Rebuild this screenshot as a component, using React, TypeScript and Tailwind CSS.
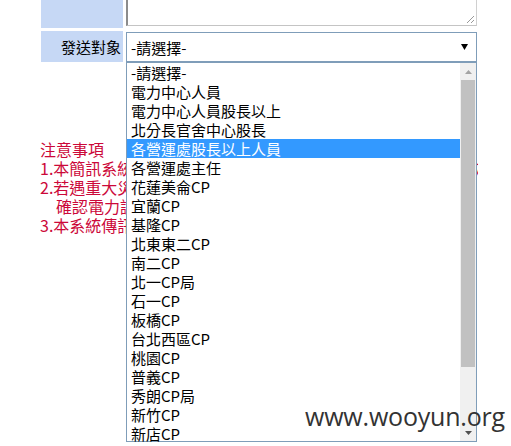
const options = [
  "-請選擇-",
  "電力中心人員",
  "電力中心人員股長以上",
  "北分長官舍中心股長",
  "各營運處股長以上人員",
  "各營運處主任",
  "花蓮美侖CP",
  "宜蘭CP",
  "基隆CP",
  "北東東二CP",
  "南二CP",
  "北一CP局",
  "石一CP",
  "板橋CP",
  "台北西區CP",
  "桃園CP",
  "普義CP",
  "秀朗CP局",
  "新竹CP",
  "新店CP",
];

const selected = 4;

export default function App() {
  return (
    <div className="relative w-[511px] h-[446px] overflow-hidden bg-white text-black font-['Noto_Sans_CJK_TC',sans-serif]">
      {/* form table */}
      <div className="pl-[41px] flex flex-col gap-[3px]">
        <div className="flex gap-[3px]">
          <div className="w-[82px] h-[28px] bg-[#c6d8f5]" />
          <div className="relative w-[351px] h-[26px] border-l-2 border-l-[#8c8c8c] border-r border-b border-r-[#d0d0d0] border-b-[#c4c4c4] bg-white">
            <svg className="absolute right-[1px] bottom-[1px]" width="10" height="10" viewBox="0 0 10 10">
              <line x1="9" y1="2" x2="2" y2="9" stroke="#9a9a9a" strokeWidth="1" />
              <line x1="9" y1="6" x2="6" y2="9" stroke="#9a9a9a" strokeWidth="1" />
            </svg>
          </div>
        </div>
        <div className="flex gap-[3px]">
          <div className="w-[82px] h-[31px] bg-[#c6d8f5] flex items-center justify-end pr-[2px] text-[15px] leading-[19px]">
            發送對象
          </div>
          <div className="mt-[1px] w-[351px] h-[30px] border border-[#7f9db9] flex items-center justify-between pl-[4px] pr-[8px] text-[15px] leading-[19px]">
            <span>-請選擇-</span>
            <svg width="7" height="6" viewBox="0 0 7 6">
              <path d="M0 0 L7 0 L3.5 6 Z" fill="#000" />
            </svg>
          </div>
        </div>
      </div>

      {/* notes */}
      <div className="mt-[78px] pl-[40px] text-[#cc0839] text-[16px] leading-[19px]">
        <div>注意事項</div>
        <div className="w-[438px] overflow-hidden whitespace-nowrap">
          1.本簡訊系統僅供本公司內部人員緊急事故通報聯繫使用，請勿濫用
        </div>
        <div>2.若遇重大災害事故，請先</div>
        <div className="pl-[16px]">確認電力調度中心</div>
        <div>3.本系統傳訊紀錄</div>
      </div>

      {/* open dropdown list */}
      <div className="absolute left-[126px] top-[62px] w-[351px] h-[380px] border border-[#7f9db9] bg-white flex">
        <div className="flex-1 flex flex-col text-[15px] leading-[19px]">
          {options.map((o, i) => (
            <div
              key={o}
              className={
                i === selected
                  ? "h-[19px] pl-[4px] bg-[#3399ff] text-white whitespace-nowrap"
                  : "h-[19px] pl-[4px] whitespace-nowrap"
              }
            >
              {o}
            </div>
          ))}
        </div>
        <div className="w-[16px] bg-[#f0f0f0] flex flex-col items-center">
          <div className="h-[17px] flex items-center justify-center">
            <svg width="7" height="4" viewBox="0 0 7 4">
              <path d="M0 4 L3.5 0 L7 4 Z" fill="#a3a3a3" />
            </svg>
          </div>
          <div className="w-[14px] h-[287px] bg-[#c1c1c1]" />
          <div className="flex-1" />
          <div className="h-[17px] flex items-center justify-center">
            <svg width="7" height="4" viewBox="0 0 7 4">
              <path d="M0 0 L7 0 L3.5 4 Z" fill="#505050" />
            </svg>
          </div>
        </div>
      </div>

      {/* watermark */}
      <div className="absolute left-[305px] top-[399px] text-[25px] leading-[34px] tracking-[-0.2px] text-[#333333] font-['Open_Sans',sans-serif]">
        www.wooyun.org
      </div>
    </div>
  );
}
